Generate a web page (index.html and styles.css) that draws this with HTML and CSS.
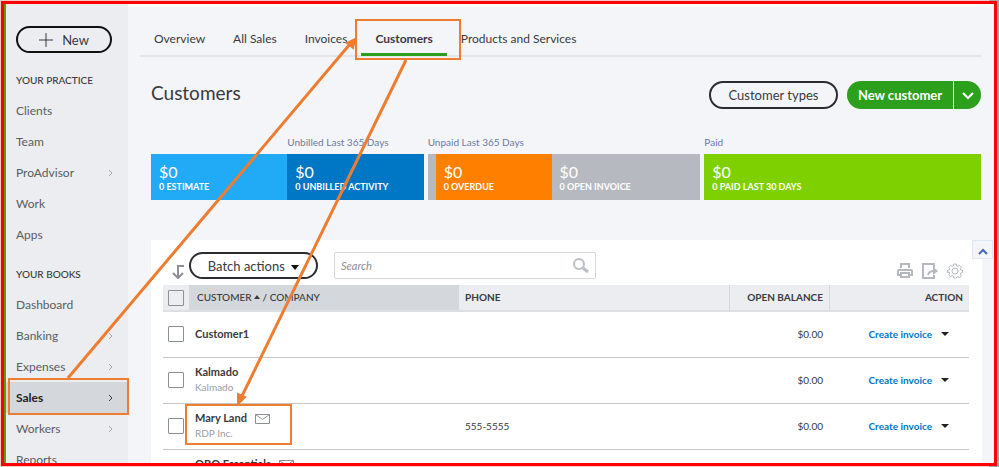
FILE: index.html
```html
<!DOCTYPE html>
<html lang="en">
<head>
    <meta charset="UTF-8">
    <meta name="viewport" content="width=device-width, initial-scale=1.0">
    <title>Customers</title>
    <link rel="stylesheet" href="styles.css">
</head>
<body>
    <div class="frame">
        <!-- Sidebar -->
        <nav class="sidebar">
            <button type="button" class="new-button">
                <svg width="14" height="14" viewBox="0 0 14 14"><path d="M7 0v14M0 7h14"/></svg>
                New
            </button>
            <h2>YOUR PRACTICE</h2>
            <a href="#">Clients</a>
            <a href="#">Team</a>
            <a href="#">ProAdvisor <svg class="chevron" viewBox="0 0 6 8"><path d="M1 1l3 3-3 3"/></svg></a>
            <a href="#">Work</a>
            <a href="#">Apps</a>
            <h2>YOUR BOOKS</h2>
            <a href="#">Dashboard</a>
            <a href="#">Banking <svg class="chevron" viewBox="0 0 6 8"><path d="M1 1l3 3-3 3"/></svg></a>
            <a href="#">Expenses <svg class="chevron" viewBox="0 0 6 8"><path d="M1 1l3 3-3 3"/></svg></a>
            <a href="#" class="active">Sales <svg class="chevron" viewBox="0 0 6 8"><path d="M1 1l3 3-3 3"/></svg></a>
            <a href="#">Workers <svg class="chevron" viewBox="0 0 6 8"><path d="M1 1l3 3-3 3"/></svg></a>
            <a href="#">Reports</a>
        </nav>

        <main class="main">
            <!-- Tabs -->
            <div class="tabs">
                <a href="#">Overview</a>
                <a href="#">All Sales</a>
                <a href="#">Invoices</a>
                <a href="#" class="active">Customers</a>
                <a href="#">Products and Services</a>
            </div>

            <div class="page-header">
                <h1>Customers</h1>
                <button type="button" class="outline-button">Customer types</button>
                <div class="split-button">
                    <button type="button" class="split-main">New customer</button>
                    <button type="button" class="split-toggle" aria-label="More options">
                        <svg width="12" height="8" viewBox="0 0 12 8"><path d="M1 1l5 5 5-5"/></svg>
                    </button>
                </div>
            </div>

            <!-- Money bar -->
            <div class="money-bar">
                <div class="money-group">
                    <div class="segment">
                        <span class="caption"></span>
                        <div class="amount estimate"><strong>$0</strong><span>0 ESTIMATE</span></div>
                    </div>
                    <div class="segment">
                        <span class="caption">Unbilled Last 365 Days</span>
                        <div class="amount unbilled"><strong>$0</strong><span>0 UNBILLED ACTIVITY</span></div>
                    </div>
                </div>
                <div class="money-group unpaid">
                    <span class="caption">Unpaid Last 365 Days</span>
                    <div class="unpaid-row">
                        <div class="amount overdue"><strong>$0</strong><span>0 OVERDUE</span></div>
                        <div class="amount open"><strong>$0</strong><span>0 OPEN INVOICE</span></div>
                    </div>
                </div>
                <div class="money-group">
                    <div class="segment">
                        <span class="caption">Paid</span>
                        <div class="amount paid"><strong>$0</strong><span>0 PAID LAST 30 DAYS</span></div>
                    </div>
                </div>
            </div>

            <!-- Customer list -->
            <section class="panel">
                <button type="button" class="collapse" aria-label="Collapse">
                    <svg width="10" height="7" viewBox="0 0 10 7"><path d="M1 6l4-4 4 4"/></svg>
                </button>
                <div class="toolbar">
                    <svg class="sort-icon" width="13" height="14" viewBox="0 0 13 14"><path d="M12 1H6v11M1 8l5 5 5-5"/></svg>
                    <button type="button" class="outline-button batch">Batch actions
                        <svg width="8" height="5" viewBox="0 0 8 5"><path d="M0 0h8L4 5z"/></svg>
                    </button>
                    <div class="search">
                        <input type="search" placeholder="Search" aria-label="Search">
                        <svg width="16" height="16" viewBox="0 0 16 16"><circle cx="6" cy="6" r="5"/><path class="handle" d="M10 10l5 4"/></svg>
                    </div>
                    <div class="tools">
                        <button type="button" aria-label="Print">
                            <svg width="16" height="16" viewBox="0 0 16 16"><path d="M4 5V1h8v4M3 12H1V8q0-1 1-1h12q1 0 1 1v4h-2M4 10h8v4H4z"/></svg>
                        </button>
                        <button type="button" aria-label="Export">
                            <svg width="16" height="16" viewBox="0 0 16 16"><path d="M12 5V1H1v14h11v-3"/><path d="M6 12q1-4 6-4"/><path class="solid" d="M11 4l5 4-5 4z"/></svg>
                        </button>
                        <button type="button" aria-label="Settings">
                            <svg width="16" height="16" viewBox="0 0 16 16"><path class="thin" d="M6.7 1h2.6l.4 1.900 1.100.5 1.700-1.100 1.800 1.800-1.100 1.700.5 1.100 1.800.4v2.300l-1.800.5-.5 1.100 1.100 1.700-1.800 1.800-1.700-1.100-1.100.5L9.300 15H6.700l-.4-1.900-1.100-.5-1.700 1.100-1.800-1.800 1.100-1.700-.5-1.100L.5 9.600V7.300l1.800-.4.5-1.100-1.100-1.700 1.800-1.800 1.700 1.100 1.100-.5z"/><circle class="thin" cx="8" cy="8" r="3"/></svg>
                        </button>
                    </div>
                </div>

                <table class="customers">
                    <thead>
                        <tr>
                            <th class="check"><input type="checkbox" aria-label="Select all"></th>
                            <th class="name">CUSTOMER <svg width="6" height="4" viewBox="0 0 6 4"><path d="M0 4h6L3 0z"/></svg> / COMPANY</th>
                            <th class="phone">PHONE</th>
                            <th class="balance">OPEN BALANCE</th>
                            <th class="action">ACTION</th>
                        </tr>
                    </thead>
                    <tbody>
                        <tr>
                            <td class="check"><input type="checkbox" aria-label="Select Customer1"></td>
                            <td class="name"><b>Customer1</b></td>
                            <td></td>
                            <td class="balance">$0.00</td>
                            <td class="action"><a href="#">Create invoice</a><button type="button" aria-label="More actions"><svg width="8" height="4" viewBox="0 0 8 4"><path d="M0 0h8L4 4z"/></svg></button></td>
                        </tr>
                        <tr>
                            <td class="check"><input type="checkbox" aria-label="Select Kalmado"></td>
                            <td class="name"><b>Kalmado</b><small>Kalmado</small></td>
                            <td></td>
                            <td class="balance">$0.00</td>
                            <td class="action"><a href="#">Create invoice</a><button type="button" aria-label="More actions"><svg width="8" height="4" viewBox="0 0 8 4"><path d="M0 0h8L4 4z"/></svg></button></td>
                        </tr>
                        <tr>
                            <td class="check"><input type="checkbox" aria-label="Select Mary Land"></td>
                            <td class="name"><b>Mary Land <svg class="mail" width="15" height="10" viewBox="0 0 15 10"><path d="M.5.5h14v9H.5zl7 5 7-5"/></svg></b><small>RDP Inc.</small></td>
                            <td>555-5555</td>
                            <td class="balance">$0.00</td>
                            <td class="action"><a href="#">Create invoice</a><button type="button" aria-label="More actions"><svg width="8" height="4" viewBox="0 0 8 4"><path d="M0 0h8L4 4z"/></svg></button></td>
                        </tr>
                        <tr>
                            <td class="check"></td>
                            <td class="name"><b>QBO Essentials <svg class="mail" width="15" height="10" viewBox="0 0 15 10"><path d="M.5.5h14v9H.5zl7 5 7-5"/></svg></b><small>&nbsp;</small></td>
                            <td></td>
                            <td class="balance"></td>
                            <td class="action"></td>
                        </tr>
                    </tbody>
                </table>
            </section>
        </main>
    </div>

    <!-- Callout boxes and arrows -->
    <svg class="callouts">
        <rect x="9" y="379" width="119" height="35"/>
        <rect x="356" y="20" width="104" height="39"/>
        <rect x="186" y="405" width="105" height="39"/>
        <path class="line" d="M68 378L350 44M406 60L242 396"/>
        <path class="head" d="M355 39l-2 9-6-5zM238 404l0-10 7 3z"/>
    </svg>
</body>
</html>
```

FILE: styles.css
```css
* {
    box-sizing: border-box;
    margin: 0;
    padding: 0;
    font-family: Lato, "Liberation Sans", sans-serif;
}
body {
    background: linear-gradient(to right, #f3c9c4 99%, #9dacaa 99%);
    color: #393a3d;
    font-size: 12px;
    padding: 1px 2px 1px 1px;
    height: 100vh;
    overflow: hidden;
}
a {
    color: inherit;
    text-decoration: none;
}
button {
    border: none;
    background: none;
    cursor: pointer;
}
svg {
    fill: none;
    stroke: currentColor;
}
.frame {
    display: flex;
    height: 100%;
    border: 3px solid #ff0000;
    background-color: #f4f5f9;
    overflow: hidden;
}

/* Sidebar */
.sidebar {
    flex: none;
    width: 124px;
    padding-top: 22px;
    border-left: 2px solid #53a306;
    background-color: #ebedf1;
    color: #5a5c61;
}
.new-button {
    display: flex;
    align-items: center;
    justify-content: center;
    gap: 9px;
    width: 96px;
    height: 27px;
    margin: 0 0 20px 10px;
    border: 2px solid #111;
    border-radius: 14px;
    color: #393a3d;
    font-size: 13px;
}
.sidebar h2 {
    margin: 17px 0 7px 10px;
    font-size: 10px;
    line-height: 15px;
    font-weight: 500;
    color: #393a3d;
}
.sidebar .new-button + h2 {
    margin-top: 0;
}
.sidebar a {
    display: flex;
    align-items: center;
    justify-content: space-between;
    height: 31px;
    padding: 0 14px 0 10px;
    font-size: 12px;
}
.sidebar a.active {
    background-color: #d4d7dc;
    color: #222;
    font-weight: bold;
}
.chevron {
    width: 6px;
    height: 8px;
    color: #a2a5ab;
}
.active .chevron {
    color: #393a3d;
}

/* Main */
.main {
    flex: 1;
    min-width: 0;
    border-top: 3px solid #fff;
    padding: 0 13px 0 23px;
}
.tabs {
    display: flex;
    margin-left: -11px;
    border-bottom: 2px solid #e3e5e8;
}
.tabs a {
    padding: 22px 14px 4px;
    margin-bottom: -1px;
    border-bottom: 3px solid transparent;
    line-height: 20px;
}
.tabs a.active {
    border-color: #2ca01c;
    font-weight: bold;
}
.page-header {
    display: flex;
    align-items: center;
    gap: 9px;
    margin-top: 24px;
}
h1 {
    flex: 1;
    padding-bottom: 4px;
    font-size: 19px;
    line-height: 24px;
    font-weight: normal;
}
.outline-button {
    width: 129px;
    height: 28px;
    border: 2px solid #2b2c30;
    border-radius: 14px;
    font-size: 13px;
    color: #393a3d;
}
.split-button {
    display: flex;
    height: 28px;
    border-radius: 14px;
    overflow: hidden;
}
.split-main,
.split-toggle {
    background-color: #2ca01c;
    color: #fff;
    font-size: 13px;
    font-weight: bold;
}
.split-main {
    width: 106px;
}
.split-toggle {
    width: 28px;
    border-left: 1px solid #fff;
    stroke-width: 2px;
}

/* Money bar */
.money-bar {
    display: grid;
    grid-template-columns: 273fr 273fr 277fr;
    gap: 4px;
    margin-top: 25px;
}
.money-group {
    display: flex;
}
.segment {
    flex: 1;
}
.caption {
    display: block;
    height: 16px;
    margin-bottom: 4px;
    font-size: 10px;
    line-height: 16px;
    color: #6b7aa5;
}
.unpaid {
    display: block;
}
.unpaid-row {
    display: flex;
    padding-left: 8px;
    background-color: #b6bac0;
}
.amount {
    height: 46px;
    padding: 9px 8px 0;
    color: #fff;
    white-space: nowrap;
}
.amount strong {
    display: block;
    font-size: 16px;
    line-height: 18px;
    font-weight: normal;
}
.amount span {
    display: block;
    font-size: 9px;
    line-height: 12px;
    font-weight: bold;
}
.estimate {
    background-color: #21abf6;
}
.unbilled {
    background-color: #0077c5;
}
.overdue {
    flex: 100;
    background-color: #ff8000;
}
.open {
    flex: 133;
}
.paid {
    background-color: #7fd000;
}

/* Customer list */
.panel {
    position: relative;
    margin: 40px -1px 0 0;
    padding: 12px 13px 0 12px;
    background-color: #fff;
}
.collapse {
    position: absolute;
    top: 0;
    right: -11px;
    width: 21px;
    height: 19px;
    border: 1px solid #dfe6f4;
    background-color: #f4f5f9;
    color: #4a68b8;
    stroke-width: 2px;
}
.toolbar {
    display: flex;
    align-items: center;
    height: 27px;
    margin-bottom: 6px;
    padding: 0 6px 0 9px;
}
.sort-icon {
    align-self: flex-end;
    margin-right: 4px;
    color: #8d9096;
    stroke-width: 2px;
}
.batch {
    flex: none;
    height: 27px;
}
.batch svg {
    margin-left: 3px;
    vertical-align: middle;
    fill: #111;
    stroke: none;
}
.search {
    flex: 0 1 262px;
    display: flex;
    align-items: center;
    height: 27px;
    margin-left: 16px;
    padding: 0 6px;
    border: 1px solid #d4d7dc;
    border-radius: 2px;
    color: #babec5;
}
.search input {
    flex: 1;
    min-width: 0;
    border: none;
    outline: none;
    background: none;
    font-size: 11px;
}
.search input::placeholder {
    color: #8d9096;
    font-style: italic;
}
.search circle {
    stroke-width: 2px;
}
.handle {
    stroke-width: 3px;
}
.tools {
    display: flex;
    align-self: flex-end;
    gap: 9px;
    margin-left: auto;
    color: #b4b8bf;
}
.tools button {
    width: 16px;
    height: 16px;
    color: inherit;
    stroke-width: 2px;
}
.tools svg {
    display: block;
}
.tools .thin {
    stroke-width: 1px;
}
.tools .solid {
    fill: currentColor;
    stroke: none;
}
.customers {
    width: 100%;
    table-layout: fixed;
    border-collapse: separate;
    border-spacing: 0;
}
.customers th {
    height: 27px;
    padding: 0 6px 2px;
    border-bottom: 2px solid #dcdfe4;
    background-color: #ebedf1;
    font-size: 10px;
    text-align: left;
}
.customers td {
    height: 46px;
    padding: 0 6px 2px;
    border-bottom: 1px solid #c4c6ca;
    font-size: 10px;
}
.customers .check {
    width: 26px;
    padding-left: 5px;
    padding-right: 0;
}
.customers th.check {
    padding-bottom: 0;
}
.customers th.name {
    padding-left: 8px;
    background-color: #d4d7dc;
    font-weight: 500;
}
.customers th.name svg {
    vertical-align: middle;
    margin-bottom: 2px;
    fill: #393a3d;
    stroke: none;
}
.customers .balance {
    width: 100px;
    text-align: right;
}
.customers .action {
    width: 140px;
    text-align: right;
}
.customers th.balance,
.customers th.action {
    border-left: 1px solid #d4d7dc;
}
.customers b,
.customers small {
    display: block;
    font-size: 11px;
    line-height: 16px;
}
.customers small {
    color: #9a9da3;
    font-size: 10px;
    line-height: 15px;
}
.customers td.action {
    padding-right: 20px;
}
.customers td.action a {
    color: #0077c5;
    font-weight: bold;
}
.customers td.action button {
    width: 8px;
    margin-left: 9px;
}
.customers td.action svg {
    display: block;
    margin-bottom: 2px;
    fill: #222;
    stroke: none;
}
.mail {
    margin-left: 5px;
    vertical-align: middle;
    color: #8d9096;
}
.customers input {
    display: block;
    appearance: none;
    width: 16px;
    height: 16px;
    border: 1px solid #8d9096;
    border-radius: 1px;
}

/* Callouts */
.callouts {
    position: absolute;
    top: 0;
    left: 0;
    width: 100%;
    height: 100%;
    pointer-events: none;
    stroke: #ed7d31;
    stroke-width: 2px;
}
.callouts .line {
    stroke-width: 3px;
}
.callouts .head {
    fill: #ed7d31;
}
```
